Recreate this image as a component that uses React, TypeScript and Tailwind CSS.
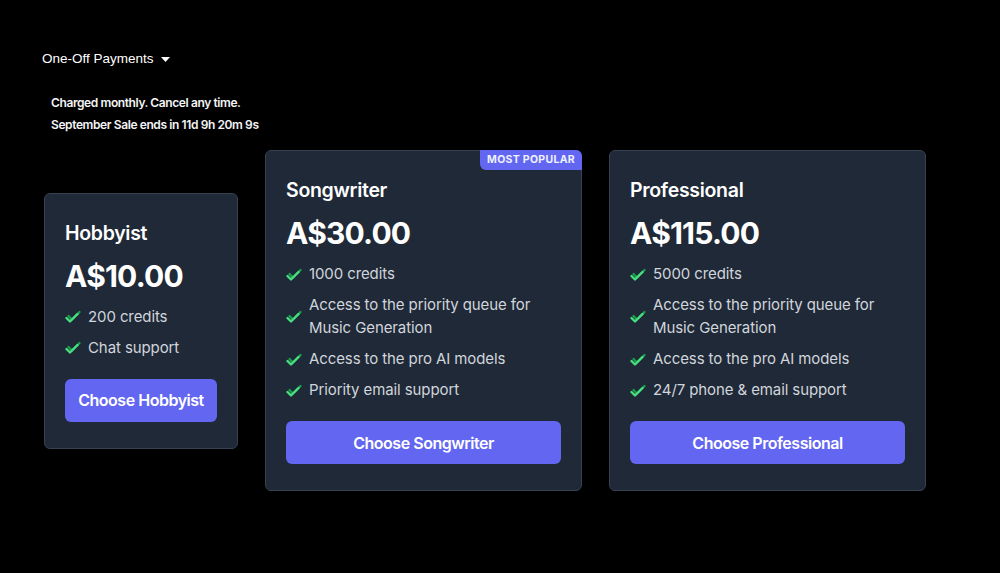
import React from "react";

type Plan = {
  name: string;
  price: string;
  features: string[];
  popular?: boolean;
  width: string;
};

const plans: Plan[] = [
  { name: "Hobbyist", price: "A$10.00", features: ["200 credits", "Chat support"], width: "w-[194px]" },
  {
    name: "Songwriter",
    price: "A$30.00",
    features: ["1000 credits", "Access to the priority queue for Music Generation", "Access to the pro AI models", "Priority email support"],
    popular: true,
    width: "w-[317px]",
  },
  {
    name: "Professional",
    price: "A$115.00",
    features: ["5000 credits", "Access to the priority queue for Music Generation", "Access to the pro AI models", "24/7 phone & email support"],
    width: "w-[317px]",
  },
];

// green tick with a darker copy stacked behind it
const Check = () => (
  <svg width="16" height="16" viewBox="0 0 16 16" fill="none" className="shrink-0">
    <path d="M3.5 8l3.5 3.5L14.5 4" stroke="#16a34a" strokeWidth="2.2" strokeLinecap="round" strokeLinejoin="round" />
    <path d="M1.5 10l3.5 3.5L12.5 6" stroke="#4ade80" strokeWidth="2.4" strokeLinecap="round" strokeLinejoin="round" />
  </svg>
);

const Card = ({ plan }: { plan: Plan }) => (
  <div className={`relative ${plan.width} rounded-md border border-[#374151] bg-[#1f2937] px-5 pt-[25px] pb-[26px]`}>
    {plan.popular && (
      <div className="absolute -top-px -right-px h-[20px] rounded-tr-md rounded-bl-md bg-[#6366f1] px-[7px] text-[10.5px] font-bold leading-[20px] tracking-[0.3px] text-indigo-50">
        MOST POPULAR
      </div>
    )}
    <h3 className="text-[19.5px] font-semibold leading-7 tracking-[-0.3px] text-white">{plan.name}</h3>
    <div className="mt-[11px] text-3xl font-bold leading-9 tracking-[-0.8px] text-white">{plan.price}</div>
    <ul className="mt-[11px] flex flex-col gap-2">
      {plan.features.map((f) => (
        <li key={f} className="flex items-center gap-[7px] text-[15px] leading-[23px] tracking-[-0.1px] text-gray-300">
          <Check />
          <span>{f}</span>
        </li>
      ))}
    </ul>
    <button className="mt-5 h-[43px] w-full rounded-md bg-[#6366f1] text-base font-semibold tracking-[-0.48px] text-white">
      Choose {plan.name}
    </button>
  </div>
);

export default function App() {
  return (
    <div className="min-h-screen bg-black pt-[49px] pl-[42px] font-['Inter',sans-serif]">
      <div className="flex items-center gap-[7px] font-['Liberation_Sans',sans-serif] text-[13.5px] leading-5 text-white">
        <span>One-Off Payments</span>
        <svg width="9" height="5" viewBox="0 0 9 5">
          <path d="M0 0h9L4.5 5z" fill="white" />
        </svg>
      </div>
      <div className="mt-[23px] ml-[9px] text-xs font-semibold leading-[22px] tracking-[-0.4px] text-gray-100">
        <p>Charged monthly. Cancel any time.</p>
        <p>September Sale ends in 11d 9h 20m 9s</p>
      </div>
      <div className="mt-[14px] ml-[2px] flex items-center gap-[27px]">
        {plans.map((p) => (
          <Card key={p.name} plan={p} />
        ))}
      </div>
    </div>
  );
}
